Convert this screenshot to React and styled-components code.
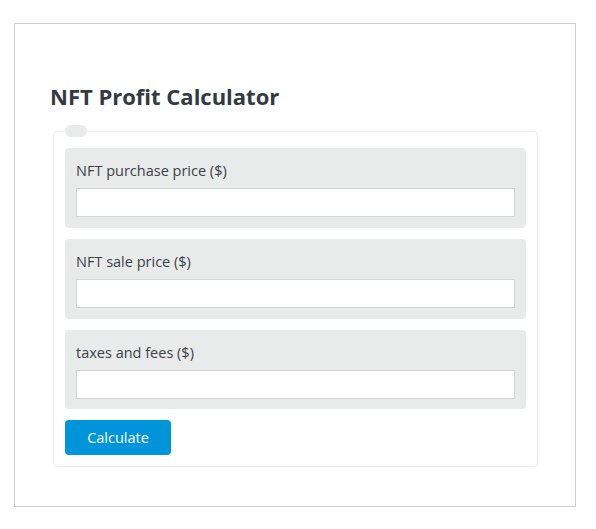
import React from "react"
import styled, { createGlobalStyle } from "styled-components"

const GlobalStyle = createGlobalStyle`
  body {
    margin: 0;
    background: #fff;
    font-family: "Open Sans", "Noto Sans", Arial, sans-serif;
  }
`

const Page = styled.div`
  padding: 23px 0 0 14px;
`

const Card = styled.div`
  box-sizing: border-box;
  width: 562px;
  height: 484px;
  border: 1px solid #cfcfd2;
  padding: 57px 38px 0 38px;
`

const Title = styled.h2`
  margin: 0 0 14px -3px;
  font-size: 22px;
  line-height: 30px;
  font-weight: 700;
  color: #333a41;
`

const Fieldset = styled.fieldset`
  box-sizing: border-box;
  width: 485px;
  margin: 0;
  padding: 11px;
  border: 1px solid #ececec;
  border-radius: 4px;
  display: flex;
  flex-direction: column;
  gap: 11px;
`

const Legend = styled.legend`
  width: 22px;
  height: 12px;
  padding: 0;
  border-radius: 6px;
  background: #e9eaea;
`

const Field = styled.div`
  box-sizing: border-box;
  height: ${(p) => p.$h || 80}px;
  padding: 13px 11px 0 11px;
  background: #e9eaea;
  border-radius: 4px;
`

const Label = styled.label`
  display: block;
  font-size: 14.5px;
  line-height: 20px;
  color: #3c4248;
  margin-bottom: 7px;
`

const Input = styled.input`
  display: block;
  box-sizing: border-box;
  width: 100%;
  height: 29px;
  margin: 0;
  border: 1px solid #d4d4d4;
  background: #fff;
  font: inherit;
  outline: none;
`

const Button = styled.button`
  align-self: flex-start;
  width: 106px;
  height: 35px;
  border: none;
  border-radius: 4px;
  background: #0095da;
  color: #fff;
  font-family: inherit;
  font-size: 14.5px;
  cursor: pointer;
`

const fields = [
  { id: "purchase", label: "NFT purchase price ($)" },
  { id: "sale", label: "NFT sale price ($)" },
  { id: "fees", label: "taxes and fees ($)", h: 79 },
]

export default function App() {
  return (
    <>
      <GlobalStyle />
      <Page>
        <Card>
          <Title>NFT Profit Calculator</Title>
          <Fieldset>
            <Legend />
            {fields.map((f) => (
              <Field key={f.id} $h={f.h}>
                <Label htmlFor={f.id}>{f.label}</Label>
                <Input id={f.id} type="text" />
              </Field>
            ))}
            <Button type="button">Calculate</Button>
          </Fieldset>
        </Card>
      </Page>
    </>
  )
}
